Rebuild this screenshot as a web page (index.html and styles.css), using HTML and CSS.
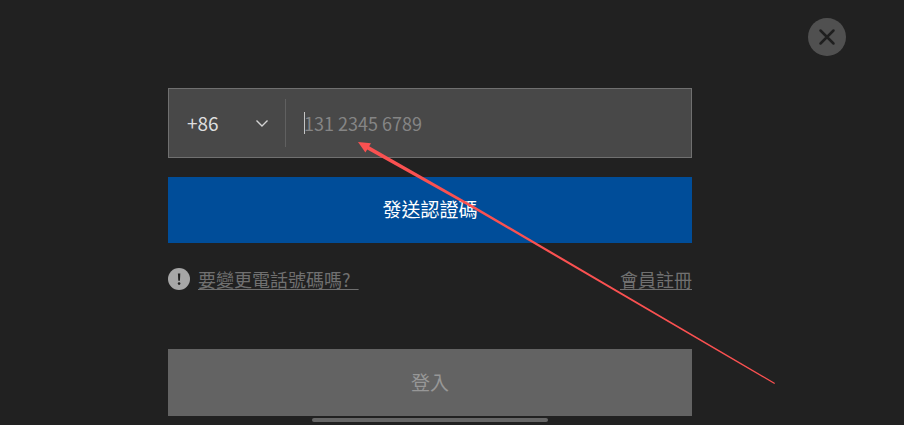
FILE: index.html
```html
<!DOCTYPE html>
<html lang="zh-Hant">
<head>
<meta charset="utf-8">
<meta name="viewport" content="width=device-width, initial-scale=1">
<title>會員登入</title>
<link rel="stylesheet" href="styles.css">
</head>
<body>
<main class="screen">
  <button class="close" type="button" aria-label="關閉">
    <svg viewBox="0 0 38 38" aria-hidden="true"><path d="M12.5 12.5 25.5 25.5M25.5 12.5 12.5 25.5"/></svg>
  </button>
  <form class="login">
    <div class="phone">
      <div class="country">
        <select class="country-select" aria-label="國碼">
          <option>+86</option>
        </select>
        <svg class="chevron" viewBox="0 0 14 8" aria-hidden="true"><path d="M1.5 1.5 7 7 12.5 1.5"/></svg>
      </div>
      <div class="number">
        <span class="caret"></span>
        <input class="number-input" type="tel" placeholder="131 2345 6789" aria-label="電話號碼">
      </div>
    </div>
    <button class="button send" type="button">發送認證碼</button>
    <div class="links">
      <svg class="notice" viewBox="0 0 22 22" aria-hidden="true"><circle cx="11" cy="11" r="11"/><path d="M9.9 5.5h2.4l-.4 7.2h-1.6z"/><circle class="dot" cx="11.1" cy="15.6" r="1.3"/></svg>
      <a class="link change" href="#change">要變更電話號碼嗎?&nbsp;&nbsp;</a>
      <a class="link" href="#register">會員註冊</a>
    </div>
    <button class="button enter" type="submit">登入</button>
  </form>
  <div class="home-bar"></div>
  <svg class="arrow" viewBox="0 0 417 242" aria-hidden="true"><path d="M0 0 13 1.2 11.2 4.2 118 65.2 417 241 416.4 242 116.8 67.4 9.2 7.6 7.4 10.6z"/></svg>
</main>
</body>
</html>
```
FILE: styles.css
```css
* {
  box-sizing: border-box;
}

body {
  margin: 0;
  background: #212121;
  color: #dedede;
  font: 18px/26px "Noto Sans CJK TC", sans-serif;
}

.screen {
  position: relative;
  display: flex;
  flex-direction: column;
  align-items: center;
  min-height: 100vh;
  padding: 88px 44px 0 0;
  overflow: hidden;
}

.close {
  position: absolute;
  top: 18px;
  right: 58px;
  width: 38px;
  height: 38px;
  padding: 0;
  border: 0;
  border-radius: 50%;
  background: #505050;
}

.close svg {
  display: block;
  fill: none;
  stroke: #1f1f1f;
  stroke-width: 2.5;
  stroke-linecap: round;
}

.login {
  display: flex;
  flex-direction: column;
  width: 100%;
  max-width: 524px;
}

.phone {
  display: flex;
  align-items: center;
  height: 70px;
  margin-bottom: 19px;
  border: 1px solid #707070;
  background: #484848;
}

.country {
  display: flex;
  align-items: center;
  width: 117px;
  height: 48px;
  padding: 0 16px 0 18px;
  border-right: 1px solid #606060;
}

.country-select {
  flex: 1;
  min-width: 0;
  padding: 0;
  border: 0;
  appearance: none;
  background: none;
  color: #dedede;
  font: 19px/26px "Noto Sans CJK TC", sans-serif;
}

.chevron {
  width: 14px;
  height: 8px;
  fill: none;
  stroke: #d4d4d4;
  stroke-width: 1.4;
}

.number {
  position: relative;
  display: flex;
  flex: 1;
  padding: 0 18px;
}

.caret {
  position: absolute;
  top: 2px;
  left: 18px;
  width: 1px;
  height: 22px;
  background: #c4c4c4;
}

.number-input {
  flex: 1;
  min-width: 0;
  padding: 0;
  border: 0;
  outline: 0;
  background: none;
  color: #dedede;
  font: 18px/26px "Noto Sans CJK TC", sans-serif;
}

.number-input::placeholder {
  color: #858585;
  opacity: 1;
}

.button {
  height: 67px;
  padding: 0 0 2px;
  border: 0;
  font: inherit;
  font-size: 19px;
}

.send {
  height: 66px;
  background: #004d99;
  color: #fff;
}

.links {
  display: flex;
  align-items: center;
  margin: 23px 0 57px;
}

.notice {
  width: 22px;
  height: 22px;
  margin-right: 8px;
  fill: #a6a6a6;
}

.notice path,
.notice .dot {
  fill: #212121;
}

.link {
  color: #707070;
  text-decoration: underline;
  text-decoration-thickness: 1px;
  text-underline-offset: 2px;
}

.change {
  margin-right: auto;
}

.enter {
  background: #636363;
  color: #979797;
}

.home-bar {
  width: 236px;
  height: 4px;
  margin-top: 2px;
  border-radius: 2px;
  background: #666;
}

.arrow {
  position: absolute;
  top: 142px;
  left: 358px;
  width: 417px;
  height: 242px;
  fill: #fa5151;
  pointer-events: none;
}
```
